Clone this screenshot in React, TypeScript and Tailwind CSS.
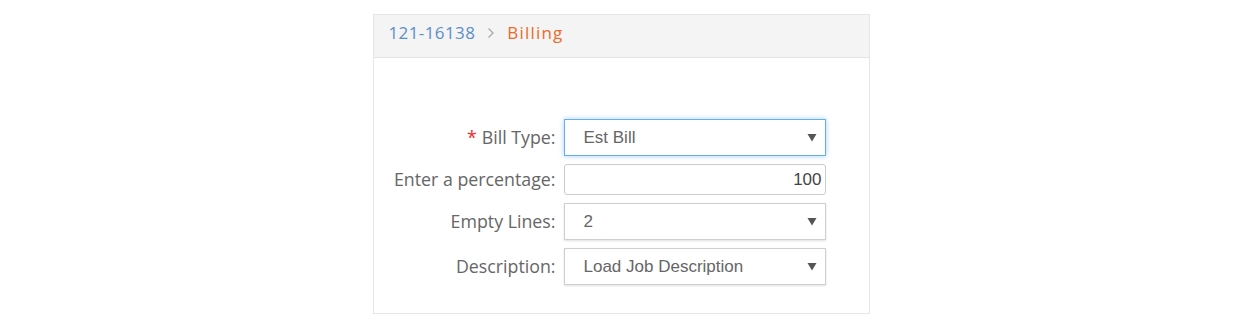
import React from "react";

const Arrow = () => (
  <svg width="10" height="9" viewBox="0 0 10 9" className="shrink-0">
    <polygon points="0.5,1 9.5,1 5,8.5" fill="#555" />
  </svg>
);

function SelectBox({ value, focused }: { value: string; focused?: boolean }) {
  return (
    <div
      className={
        "flex h-[37px] w-[262px] items-center justify-between bg-white pl-[19px] pr-[8px] " +
        (focused
          ? "border border-[#66afe9] shadow-[0_0_5px_rgba(102,175,233,0.6)]"
          : "border border-[#cfcfcf] shadow-[0_1px_2px_rgba(0,0,0,0.12)]")
      }
    >
      <span className="text-[17px] text-[#666]" style={{ fontFamily: '"Liberation Sans", Arial, sans-serif' }}>
        {value}
      </span>
      <Arrow />
    </div>
  );
}

function Label({ children }: { children: React.ReactNode }) {
  return (
    <div className="w-[182px] shrink-0 text-right text-[17.8px] text-[#666]">{children}</div>
  );
}

export default function App() {
  return (
    <div className="flex w-full justify-center bg-white pt-[14px]" style={{ fontFamily: '"Open Sans", sans-serif' }}>
      <div className="w-[497px] border border-[#e6e6e6] bg-white">
        <div className="flex h-[43px] items-start gap-[12px] border-b border-[#e3e3e3] bg-[#f4f4f4] pl-[15px] pt-[5px] text-[17px] tracking-[0.4px]">
          <span className="text-[#5b8fc7]">121-16138</span>
          <svg width="8" height="12" viewBox="0 0 8 12" className="mt-[7px]">
            <polyline points="1.5,1.5 6,6 1.5,10.5" fill="none" stroke="#aaa" strokeWidth="1.3" />
          </svg>
          <span className="tracking-[1.2px] text-[#ec6a2b]">Billing</span>
        </div>
        <div className="flex flex-col gap-[8px] pb-[28px] pt-[61px]">
          <div className="flex items-center gap-[8px]">
            <Label>
              <span className="mr-[5px] text-[#ee2a2a]">*</span>Bill Type:
            </Label>
            <SelectBox value="Est Bill" focused />
          </div>
          <div className="flex items-center gap-[8px]">
            <Label>Enter a percentage:</Label>
            <div
              className="flex h-[31px] w-[262px] items-center justify-end rounded-[3px] border border-[#cccccc] bg-white pr-[3px] text-[17px] text-[#444]"
              style={{ fontFamily: '"Liberation Sans", Arial, sans-serif' }}
            >
              100
            </div>
          </div>
          <div className="flex items-center gap-[8px]">
            <Label>Empty Lines:</Label>
            <SelectBox value="2" />
          </div>
          <div className="flex items-center gap-[8px]">
            <Label>Description:</Label>
            <SelectBox value="Load Job Description" />
          </div>
        </div>
      </div>
    </div>
  );
}
